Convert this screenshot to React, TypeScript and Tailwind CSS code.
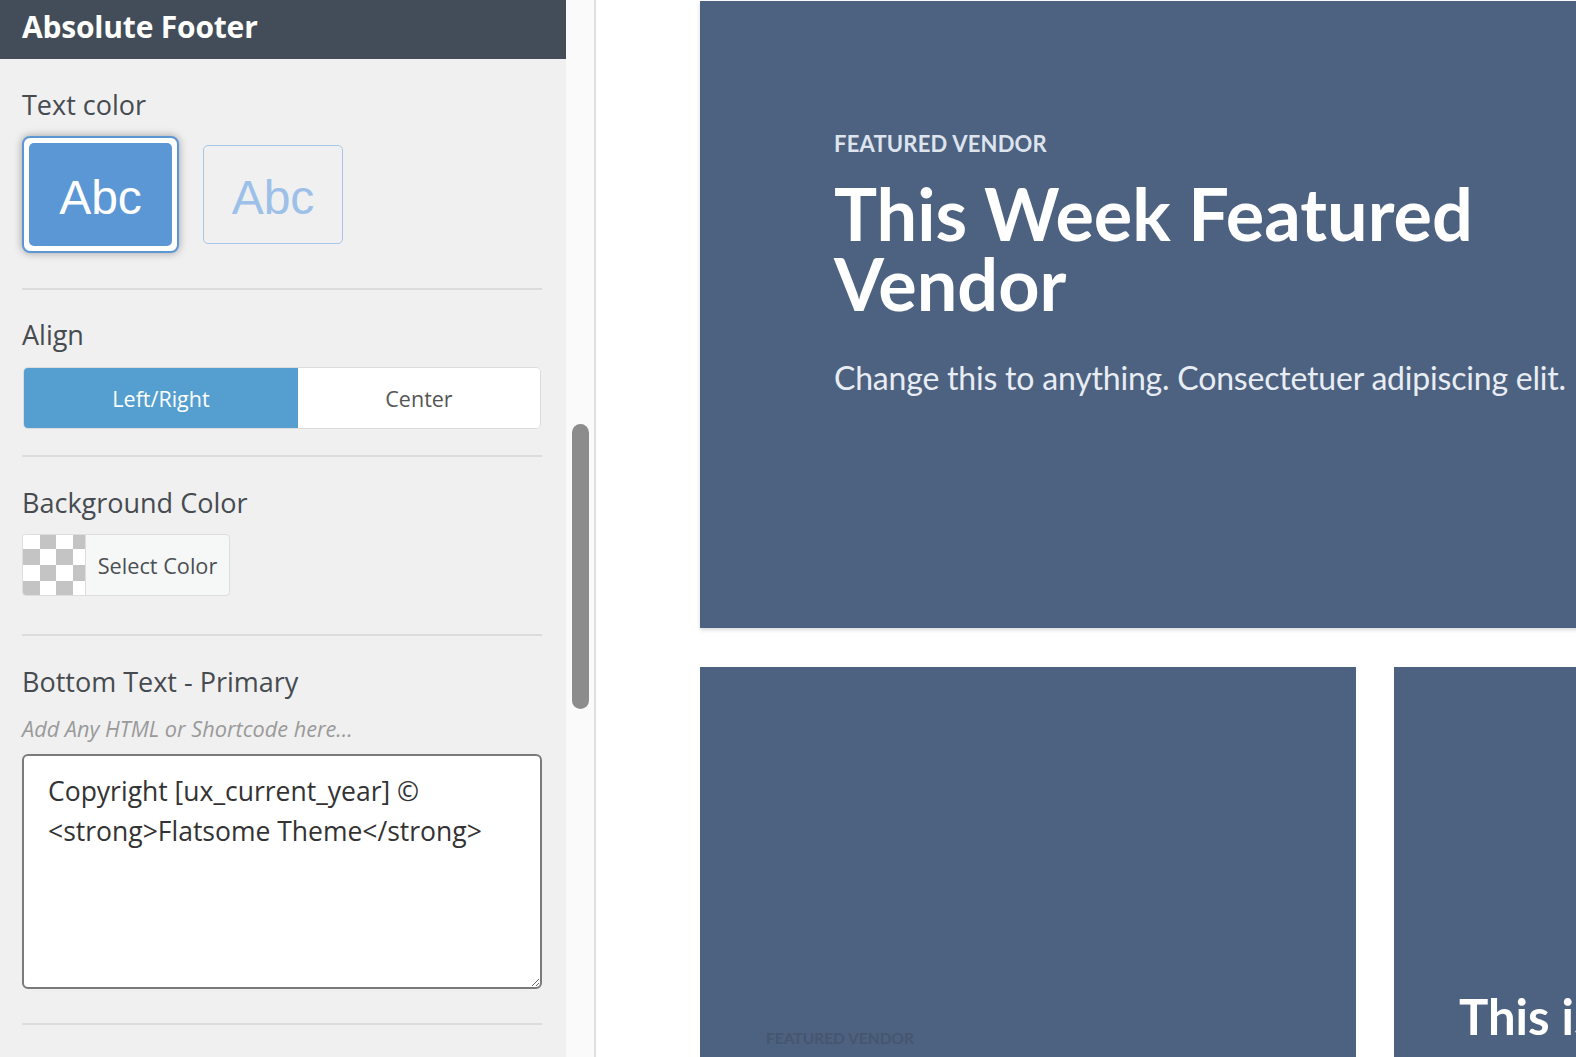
import React from "react";

const sans = { fontFamily: '"Open Sans", "Noto Sans", sans-serif' };

function Divider() {
  return <div className="h-[2px] w-full bg-[#dcdcdc]" />;
}

function Label({ children }: { children: React.ReactNode }) {
  return <div className="text-[27px] leading-[36px] font-medium text-[#464b50]">{children}</div>;
}

function Checker() {
  const cells = [];
  for (let r = 0; r < 4; r++) {
    for (let c = 0; c < 4; c++) {
      const gray = (r + c) % 2 === 1;
      cells.push(
        <div key={`${r}-${c}`} className={gray ? "bg-[#c4c4c4]" : "bg-white"} />
      );
    }
  }
  return (
    <div className="w-[63px] h-full overflow-hidden border-r border-[#dddddd]">
      <div className="grid grid-cols-[repeat(4,16.5px)] grid-rows-[repeat(4,16px)] w-[66px] h-[64px] -mt-[2px]">
        {cells}
      </div>
    </div>
  );
}

export default function App() {
  return (
    <div className="flex w-[1576px] h-[1057px] overflow-hidden bg-white" style={sans}>
      {/* Left panel */}
      <div className="w-[566px] shrink-0 bg-[#f0f0f0] flex flex-col">
        <div className="h-[59px] bg-[#434d59] flex items-center px-[22px] pb-[6px]">
          <span className="text-white font-bold text-[30px] leading-none tracking-[-0.2px]">Absolute Footer</span>
        </div>
        <div className="pl-[22px] pr-[24px] flex flex-col">
          <div className="pt-[28px]">
            <Label>Text color</Label>
          </div>
          <div className="mt-[13px] flex items-center gap-[24px]">
            <div className="w-[157px] h-[117px] rounded-[8px] bg-white border-2 border-[#5b97d5] p-[5px] shadow-[0_0_9px_rgba(0,0,0,0.35)]">
              <div className="w-full h-full rounded-[5px] bg-[#5b97d5] flex items-center justify-center pt-[6px]">
                <span className="text-white text-[48px] leading-none" style={{ fontFamily: '"Liberation Sans", Arial, sans-serif' }}>Abc</span>
              </div>
            </div>
            <div className="w-[140px] h-[99px] rounded-[5px] border border-[#a7c6e8] flex items-center justify-center pt-[6px]">
              <span className="text-[#9dc0e8] text-[48px] leading-none" style={{ fontFamily: '"Liberation Sans", Arial, sans-serif' }}>Abc</span>
            </div>
          </div>
          <div className="mt-[35px]"><Divider /></div>

          <div className="mt-[27px]"><Label>Align</Label></div>
          <div className="mt-[14px] h-[62px] flex rounded-[5px] border border-[#dcdcdc] overflow-hidden ml-[1px] mr-[1px]">
            <div className="w-[274px] bg-[#549fd0] flex items-center justify-center text-white text-[21.5px] pt-[3px]">Left/Right</div>
            <div className="flex-1 bg-white flex items-center justify-center text-[#555] text-[21.5px] pt-[3px]">Center</div>
          </div>
          <div className="mt-[26px]"><Divider /></div>

          <div className="mt-[28px]"><Label>Background Color</Label></div>
          <div className="mt-[13px] h-[62px] w-[208px] flex rounded-[4px] border border-[#dddddd] bg-[#f6f7f7] overflow-hidden">
            <Checker />
            <div className="flex-1 flex items-center justify-center text-[21.7px] text-[#4a4f54] pt-[2px]">Select Color</div>
          </div>
          <div className="mt-[38px]"><Divider /></div>

          <div className="mt-[28px]"><Label>Bottom Text - Primary</Label></div>
          <div className="mt-[14px] text-[21.7px] leading-[30px] italic text-[#9a9a9a]">Add Any HTML or Shortcode here...</div>
          <textarea
            readOnly
            defaultValue={"Copyright [ux_current_year] © <strong>Flatsome Theme</strong>"}
            className="mt-[10px] h-[235px] w-full rounded-[6px] border-2 border-[#7b7b7b] bg-white pl-[24px] pr-[16px] pt-[15px] text-[26.5px] leading-[40px] text-[#333] outline-none resize-y"
            style={sans}
          />
          <div className="mt-[34px]"><Divider /></div>
        </div>
      </div>

      {/* Scroll strip */}
      <div className="w-[30px] shrink-0 bg-[#fafafa] border-r-2 border-[#dedede] flex flex-col items-center">
        <div className="mt-[424px] w-[17px] h-[285px] rounded-full bg-[#8c8c8c]" />
      </div>

      {/* Preview */}
      <div className="flex-1 overflow-hidden bg-white pl-[104px] pt-[1px]" style={{ fontFamily: 'Lato, "Open Sans", sans-serif' }}>
        <div className="w-[1100px] h-[627px] bg-[#4d6180] shadow-[0_2px_4px_rgba(0,0,0,0.15)] pl-[134px] pt-[130px]">
          <div className="text-[22px] leading-[25px] font-bold text-[#dde4ee] tracking-[0.2px]">FEATURED VENDOR</div>
          <div className="mt-[22px] text-[72px] leading-[70px] font-bold text-white">
            This Week Featured
            <br />
            Vendor
          </div>
          <div className="mt-[38px] text-[32px] leading-[44.8px] text-[#e8edf4] tracking-[-0.2px] whitespace-nowrap">
            Change this to anything. Consectetuer adipiscing elit.
          </div>
        </div>
        <div className="mt-[39px] flex gap-[38px]">
          <div className="w-[656px] h-[500px] shrink-0 bg-[#4d6180] pl-[66px] pt-[363px]">
            <div className="text-[15.5px] leading-[16px] font-bold text-[#46566f]">FEATURED VENDOR</div>
          </div>
          <div className="w-[656px] h-[500px] shrink-0 bg-[#4d6180] pl-[65px] pt-[320px]">
            <div className="text-[49px] leading-[59px] font-bold text-white whitespace-nowrap">This is</div>
          </div>
        </div>
      </div>
    </div>
  );
}
